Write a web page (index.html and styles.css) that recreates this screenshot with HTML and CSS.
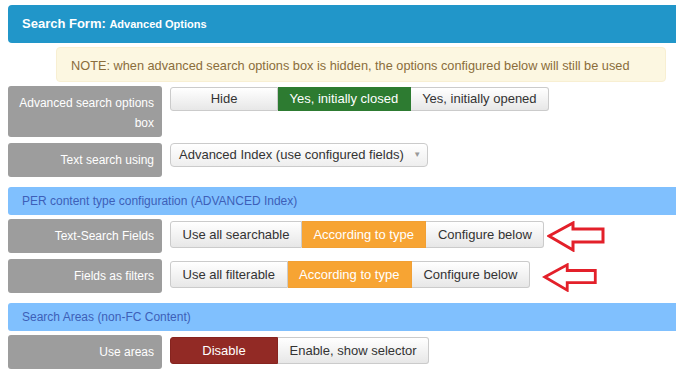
FILE: index.html
```html
<!DOCTYPE html>
<html lang="en">
<head>
    <meta charset="UTF-8">
    <title>Search Form: Advanced Options</title>
    <link rel="stylesheet" href="styles.css">
</head>
<body>
    <div class="page">
        <div class="panel-head">Search Form: <small>Advanced Options</small></div>

        <div class="note">NOTE: when advanced search options box is hidden, the options configured below will still be used</div>

        <div class="row row-tall">
            <div class="label">Advanced search options<br>box</div>
            <div class="btn-group">
                <span class="btn wide">Hide</span>
                <span class="btn on-green">Yes, initially closed</span>
                <span class="btn">Yes, initially opened</span>
            </div>
        </div>

        <div class="row">
            <div class="label">Text search using</div>
            <div class="select">Advanced Index (use configured fields) <span class="caret">&#9660;</span></div>
        </div>

        <div class="subhead">PER content type configuration (ADVANCED Index)</div>

        <div class="row">
            <div class="label">Text-Search Fields</div>
            <div class="btn-group">
                <span class="btn">Use all searchable</span>
                <span class="btn on-orange">According to type</span>
                <span class="btn">Configure below</span>
            </div>
            <svg class="arrow arrow-1" width="59" height="31" viewBox="0 0 59 31">
                <polygon points="2,15 26,2 26,8 56,8 56,21 26,21 26,29" fill="#fff" stroke="#e3202a" stroke-width="3" stroke-linejoin="miter"/>
            </svg>
        </div>

        <div class="row">
            <div class="label">Fields as filters</div>
            <div class="btn-group">
                <span class="btn">Use all filterable</span>
                <span class="btn on-orange">According to type</span>
                <span class="btn">Configure below</span>
            </div>
            <svg class="arrow arrow-2" width="59" height="31" viewBox="0 0 59 31">
                <polygon points="2,15 26,2 26,8 56,8 56,21 26,21 26,29" fill="#fff" stroke="#e3202a" stroke-width="3" stroke-linejoin="miter"/>
            </svg>
        </div>

        <div class="subhead">Search Areas (non-FC Content)</div>

        <div class="row">
            <div class="label">Use areas</div>
            <div class="btn-group">
                <span class="btn wide on-red">Disable</span>
                <span class="btn">Enable, show selector</span>
            </div>
        </div>
    </div>
</body>
</html>
```

FILE: styles.css
```css
* { box-sizing: border-box; }
html, body { margin: 0; padding: 0; overflow: hidden; background: #fff; }
body { font-family: 'Liberation Sans', Arial, sans-serif; font-size: 13px; color: #333; }
.page { width: 690px; margin-left: 8px; padding-top: 5px; }

.panel-head { height: 38px; line-height: 38px; padding-left: 14px; background: #2196c9; color: #fff; font-weight: bold; font-size: 13px; border-radius: 4px; }
.panel-head small { font-size: 11px; }

.note { width: 610px; margin: 4px 0 0 48px; height: 35px; line-height: 35px; padding-left: 14px; background: #fcf7e1; border: 1px solid #f8efd2; border-radius: 4px; color: #8a6d3b; font-size: 12.75px; }

.row { display: flex; align-items: flex-start; margin-top: 6px; }
.note + .row { margin-top: 4px; }
.subhead + .row { margin-top: 4px; }
.label { width: 154px; flex: none; min-height: 34px; padding: 9px 8px 0 8px; background: #9d9d9d; color: #fff; font-size: 12px; text-align: right; border-radius: 3px; line-height: 16px; }
.row-tall .label { height: 51px; padding: 7px 8px 0 0; line-height: 20px; white-space: nowrap; }

.btn-group { display: flex; margin: 2px 0 0 8px; }
.row-tall .btn-group { margin-top: 1px; }
.btn { display: block; height: 27px; line-height: 25px; padding: 0 11.5px; text-align: center; color: #333; background: linear-gradient(#fff, #e7e7e7); border: 1px solid #cbcbcb; border-left-width: 0; white-space: nowrap; }
.btn:first-child { border-left-width: 1px; border-radius: 3px 0 0 3px; }
.btn:last-child { border-radius: 0 3px 3px 0; }
.row-tall .btn { height: 24px; line-height: 22px; }
.wide { min-width: 108px; }
.on-green { background: #2d7b31; border-color: #2d7b31; color: #fff; }
.on-orange { background: #f7a433; border-color: #f1a035; color: #fff; }
.on-red { background: #922a25; border-color: #86241f; color: #fff; }

.select { margin-left: 8px; width: 258px; height: 24px; line-height: 22px; padding-left: 8px; border: 1px solid #cbcbcb; border-radius: 4px; background: linear-gradient(#fff, #eee); color: #333; }
.select .caret { font-size: 8px; color: #999; margin-left: 6px; vertical-align: 2px; }

.subhead { margin-top: 10px; height: 28px; line-height: 28px; padding-left: 14px; background: #80c0fe; color: #3d5fb8; font-size: 12px; border-radius: 3px 0 0 3px; }

.arrow { flex: none; }
.arrow-1 { margin: 2px 0 0 3px; }
.arrow-2 { margin: 4px 0 0 12px; width: 57px; height: 29px; }
```
